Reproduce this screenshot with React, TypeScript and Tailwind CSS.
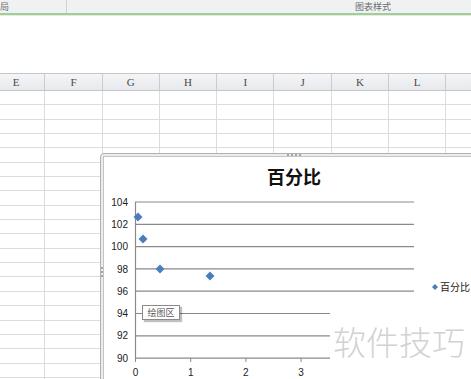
import React from "react";

const cols = ["E", "F", "G", "H", "I", "J", "K", "L", ""];
const rows = Array.from({ length: 21 }, (_, i) => i);

const yTicks = [104, 102, 100, 98, 96, 94, 92, 90];
const yPos = (v: number) => 203 + ((104 - v) / 2) * 22.3;
const xPos = (v: number) => 136.5 + v * 55.2;

const points: [number, number][] = [
  [139, 218],
  [144, 240],
  [161, 270],
  [211, 277],
];

const Diamond = ({ x, y, r = 4.5 }: { x: number; y: number; r?: number }) => (
  <polygon points={`${x},${y - r} ${x + r},${y} ${x},${y + r} ${x - r},${y}`} fill="#4a7ebb" />
);

const Chart = () => {
  return (
    <div className="absolute left-[100px] top-[153px] w-[390px] h-[240px] rounded-tl-[4px] border border-[#b2b2b2] bg-[#ececec] p-[2px]">
      {/* frame handles */}
      <div className="absolute left-[186px] top-[0px] flex gap-[2px]">
        {[0, 1, 2, 3].map((i) => (
          <span key={i} className="w-[2px] h-[2px] bg-[#a5a5a5]" />
        ))}
      </div>
      <div className="absolute left-[0px] top-[113px] flex flex-col gap-[2px]">
        {[0, 1, 2].map((i) => (
          <span key={i} className="w-[2px] h-[2px] bg-[#a5a5a5]" />
        ))}
      </div>
      <div className="relative w-full h-full border border-[#c4c4c4] bg-white">
        <div
          className="absolute left-0 top-[10px] w-[380px] text-center text-[18px] leading-none font-bold text-[#111]"
          style={{ fontFamily: '"Noto Sans CJK SC", sans-serif' }}
        >
          百分比
        </div>
        <svg className="absolute left-[-1px] top-[-1px]" width="400" height="240">
          <g transform="translate(-104,-157)" fontFamily="'Liberation Sans', Arial, sans-serif" fontSize="10" fill="#222">
            {yTicks.map((v) => (
              <g key={v}>
                <line x1={136} x2={415} y1={yPos(v)} y2={yPos(v)} stroke="#8a8a8a" strokeWidth="1.2" />
                <text x={129} y={yPos(v) + 3.6} textAnchor="end">
                  {v}
                </text>
              </g>
            ))}
            <line x1={136.5} x2={136.5} y1={203} y2={360} stroke="#8a8a8a" strokeWidth="1.2" />
            {[0, 1, 2, 3].map((v) => (
              <g key={v}>
                <line x1={xPos(v)} x2={xPos(v)} y1={359} y2={363} stroke="#8a8a8a" />
                <text x={xPos(v)} y={377} textAnchor="middle">
                  {v}
                </text>
              </g>
            ))}
            {points.map(([x, y], i) => (
              <Diamond key={i} x={x} y={y} />
            ))}
            <Diamond x={436} y={288} r={3} />
            <text x={441} y={292} fontSize="10" fontFamily="'Noto Sans CJK SC', sans-serif" fill="#222">
              百分比
            </text>
          </g>
        </svg>
        <div
          className="absolute left-[38px] top-[148px] w-[38px] h-[15px] flex items-center justify-center border border-[#8a8a8a] bg-white text-[9px] text-[#5a5a5a] shadow-[2px_2px_1px_rgba(0,0,0,0.25)]"
          style={{ fontFamily: '"Noto Sans CJK SC", sans-serif' }}
        >
          绘图区
        </div>
      </div>
    </div>
  );
};

export default function App() {
  return (
    <div
      className="relative w-[471px] h-[379px] overflow-hidden bg-white"
      style={{ fontFamily: '"Noto Sans CJK SC", sans-serif' }}
    >
      {/* ribbon */}
      <div className="flex h-[13px] bg-[#eff1f3] text-[9px] leading-[13px] text-[#6b6b6b]">
        <div className="w-[67px] border-r border-[#d0d3d6]">局</div>
        <div className="flex-1 pl-[288px]">图表样式</div>
      </div>
      <div className="h-[2px] bg-[#a3cd98]" />
      <div className="h-[1px] bg-[#e3eee0]" />
      <div className="h-[57px]" />

      {/* column headers */}
      <div className="flex ml-[-12px] h-[18px] border-t border-b border-[#c3c7cc] bg-gradient-to-b from-[#f4f5f7] to-[#e7e9ec]">
        {cols.map((c, i) => (
          <div
            key={i}
            className="w-[57.3px] shrink-0 border-r border-[#c9ccd0] flex items-center justify-center text-[11px] text-[#4a4a4a]"
            style={{ fontFamily: '"Liberation Serif", serif' }}
          >
            {c}
          </div>
        ))}
      </div>

      {/* grid */}
      <div className="flex flex-col ml-[-12px]">
        {rows.map((r) => (
          <div key={r} className="flex h-[14.35px]">
            {cols.map((c, i) => (
              <div key={i} className="w-[57.3px] shrink-0 border-r border-b border-[#dadcdf]" />
            ))}
          </div>
        ))}
      </div>

      <Chart />

      {/* watermark */}
      <div className="absolute left-[330px] top-[300px] w-[141px] h-[79px] bg-white pt-[25px] pl-[3px]">
        <div className="text-[33px] leading-none font-light text-[#d2d2d2] whitespace-nowrap">软件技巧</div>
      </div>
    </div>
  );
}
